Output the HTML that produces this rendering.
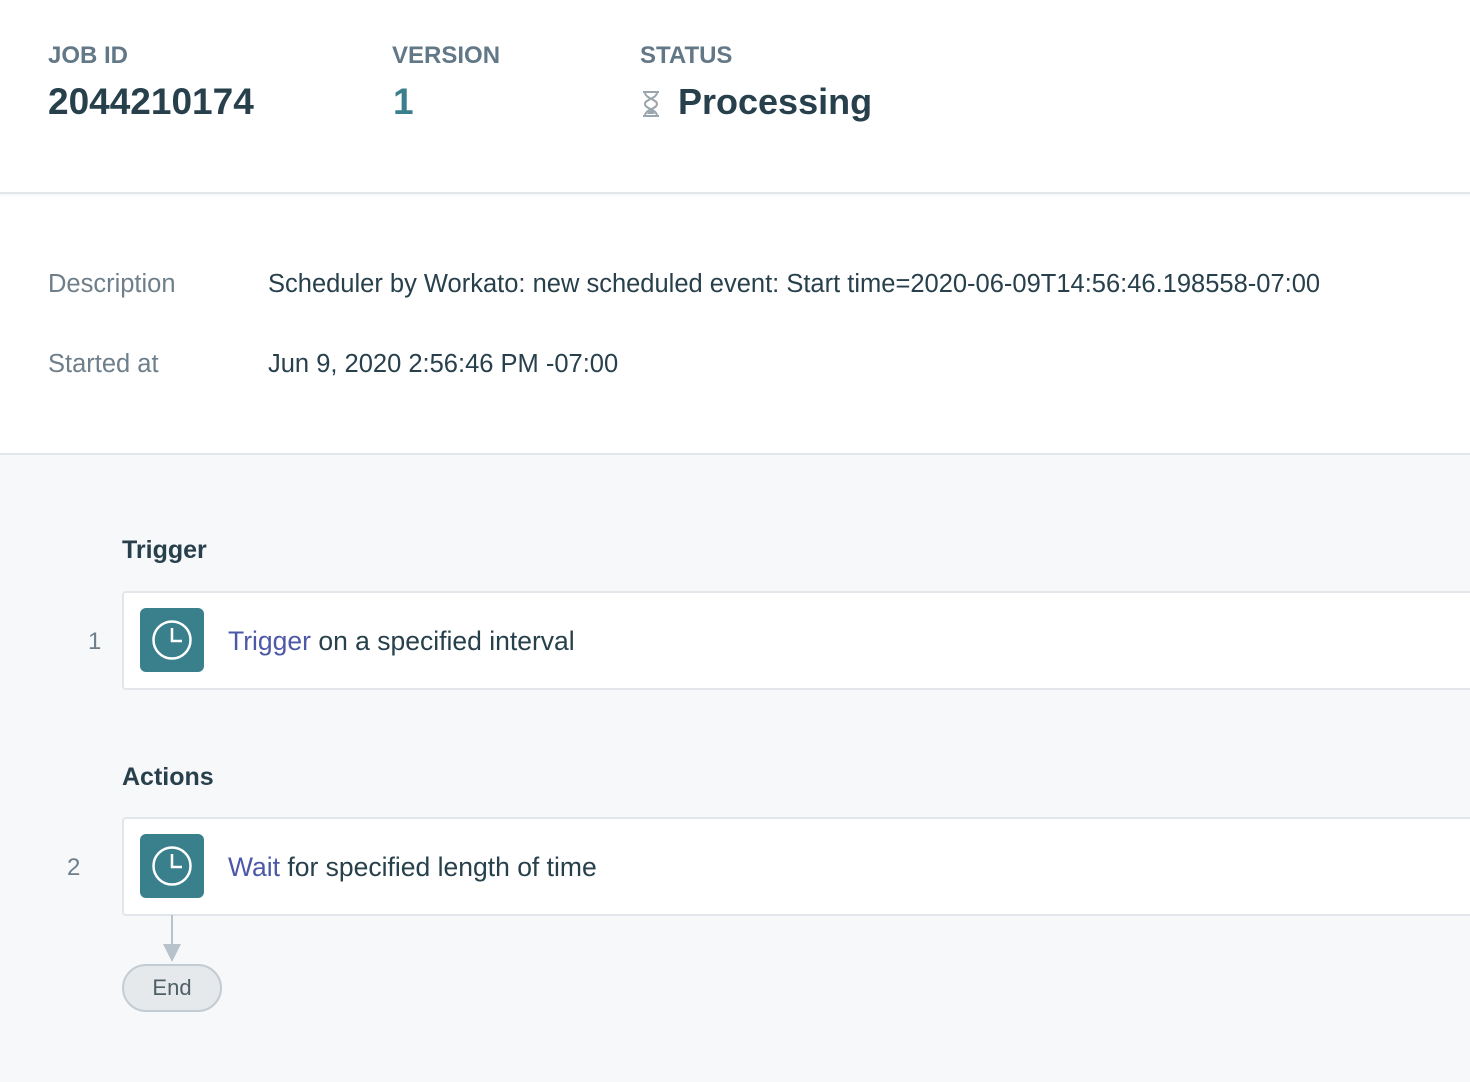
<!DOCTYPE html>
<html><head><style>
*{margin:0;padding:0;box-sizing:border-box}
body{width:1470px;height:1082px;overflow:hidden;font-family:"Liberation Sans",sans-serif;background:#f7f8fa;position:relative;color:#27404c}
.a{position:absolute;white-space:nowrap}
.top{position:absolute;left:0;top:0;width:1470px;height:194px;background:#fff;border-bottom:2px solid #e2e6ea}
.mid{position:absolute;left:0;top:196px;width:1470px;height:259px;background:#fff;border-bottom:2px solid #e2e6ea}
.lbl{font-size:24px;color:#637887;font-weight:bold}
.val{font-size:37px;font-weight:bold;color:#27404c}
.k{font-size:25.5px;color:#6e7f8b}
.v{font-size:25.5px;color:#27404c}
.h{font-size:25px;font-weight:bold;color:#27404c}
.card{position:absolute;left:122px;width:1360px;height:99px;background:#fff;border:2px solid #e2e6ea;border-radius:4px}
.ic{position:absolute;left:16px;top:15px;width:64px;height:64px;background:#3a808c;border-radius:6px}
.ct{position:absolute;left:104px;top:33px;font-size:26.5px;color:#27404c;white-space:nowrap}
.ct b{font-weight:normal;color:#4c58a8}
.num{font-size:24px;color:#6e7f8b}
</style></head><body>
<div class="top"></div>
<div class="mid"></div>
<div class="a lbl" style="left:48px;top:42px">JOB ID</div>
<div class="a lbl" style="left:392px;top:42px">VERSION</div>
<div class="a lbl" style="left:640px;top:42px">STATUS</div>
<div class="a val" style="left:48px;top:81px">2044210174</div>
<div class="a val" style="left:393px;top:81px;color:#3a808c">1</div>
<svg class="a" style="left:640px;top:90px" width="22" height="28" viewBox="0 0 22 28"><path d="M3 2h16M3 26h16M5 2c0 7 12 7 12 12s-12 5-12 12M17 2c0 7-12 7-12 12s12 5 12 12" stroke="#9aa5ad" stroke-width="2" fill="none"/><path d="M7 24l4-6 4 6z" fill="#9aa5ad"/></svg>
<div class="a val" style="left:678px;top:81px;font-size:36px">Processing</div>
<div class="a k" style="left:48px;top:270px">Description</div>
<div class="a v" style="left:268px;top:270px">Scheduler by Workato: new scheduled event: Start time=2020-06-09T14:56:46.198558-07:00</div>
<div class="a k" style="left:48px;top:350px">Started at</div>
<div class="a v" style="left:268px;top:350px">Jun 9, 2020 2:56:46 PM -07:00</div>
<div class="a h" style="left:122px;top:536px">Trigger</div>
<div class="a num" style="left:88px;top:628px">1</div>
<div class="card" style="top:591px"><div class="ic"><svg width="64" height="64"><circle cx="32" cy="32" r="18.5" stroke="#fff" stroke-width="2.5" fill="none"/><path d="M32 20v13h10" stroke="#fff" stroke-width="2.5" fill="none"/></svg></div><div class="ct"><b>Trigger</b> on a specified interval</div></div>
<div class="a h" style="left:122px;top:763px">Actions</div>
<div class="a num" style="left:67px;top:854px">2</div>
<div class="card" style="top:817px"><div class="ic"><svg width="64" height="64"><circle cx="32" cy="32" r="18.5" stroke="#fff" stroke-width="2.5" fill="none"/><path d="M32 20v13h10" stroke="#fff" stroke-width="2.5" fill="none"/></svg></div><div class="ct"><b>Wait</b> for specified length of time</div></div>
<svg class="a" style="left:160px;top:915px" width="24" height="50"><path d="M12 0v32" stroke="#b8c2ca" stroke-width="2"/><path d="M3 29h18l-9 18z" fill="#b8c2ca"/></svg>
<div class="a" style="left:122px;top:964px;width:100px;height:48px;border:2px solid #c3ccd3;border-radius:24px;background:#e6e9ec;text-align:center;line-height:44px;font-size:22px;color:#4e5f66">End</div>
</body></html>
